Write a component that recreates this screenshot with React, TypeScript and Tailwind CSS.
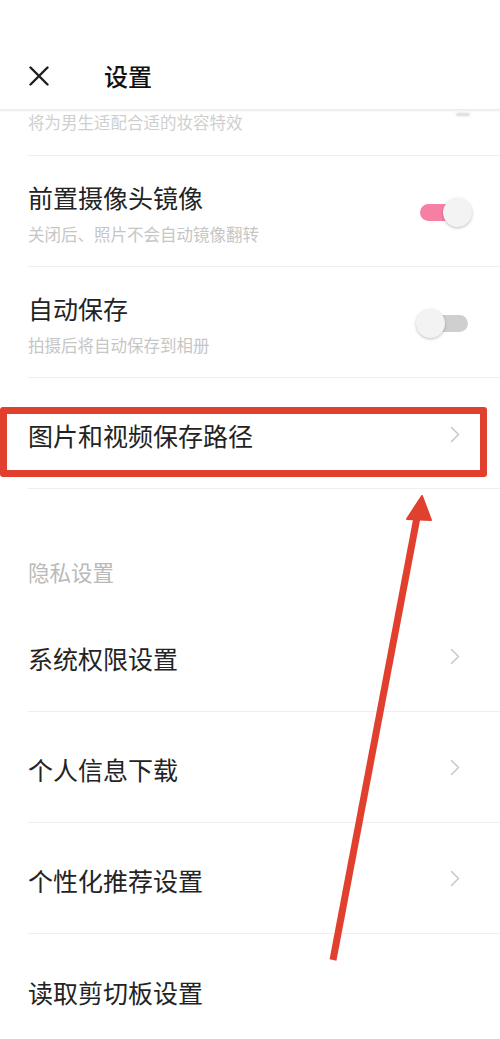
import { ReactNode } from "react";

const font = { fontFamily: '"Noto Sans CJK SC", "Noto Sans", sans-serif' };

const Chevron = () => (
  <svg width="10" height="17" viewBox="0 0 10 17" fill="none" className="shrink-0">
    <path d="M1.5 1.5 L8.5 8.5 L1.5 15.5" stroke="#c9c9c9" strokeWidth="1.6" strokeLinecap="round" strokeLinejoin="round" />
  </svg>
);

const Toggle = ({ on }: { on: boolean }) => (
  <div className="relative w-[52px] h-[29px] shrink-0">
    <div
      className={
        on
          ? "absolute left-0 top-[6px] w-[44px] h-[17px] rounded-full bg-[#f77fa4]"
          : "absolute right-0 top-[6px] w-[44px] h-[17px] rounded-full bg-[#cfcfcf]"
      }
    />
    <div
      className={
        on
          ? "absolute right-0 top-0 w-[29px] h-[29px] rounded-full bg-[#f3f3f3] shadow-[0_1px_3px_rgba(0,0,0,0.25)]"
          : "absolute left-0 top-0 w-[29px] h-[29px] rounded-full bg-[#f3f3f3] shadow-[0_1px_3px_rgba(0,0,0,0.25)]"
      }
    />
  </div>
);

interface RowProps {
  title: string;
  desc?: string;
  right: ReactNode;
  last?: boolean;
  children?: ReactNode;
}

const Row = ({ title, desc, right, last, children }: RowProps) => (
  <div className="relative pl-[28px]">
    <div
      className={
        last
          ? "h-[111px] flex items-center justify-between"
          : "h-[111px] flex items-center justify-between border-b border-[#efefef]"
      }
    >
      {desc ? (
        <div className="flex flex-col pt-[3px]">
          <span className="text-[25px] leading-[34px] text-[#232323]">{title}</span>
          <span className="text-[16.5px] leading-[22px] mt-[9px] text-[#c6c6c6]">{desc}</span>
        </div>
      ) : (
        <span className="text-[25px] leading-[34px] text-[#232323] pt-[4px]">{title}</span>
      )}
      {right}
    </div>
    {children}
  </div>
);

export default function App() {
  return (
    <div className="relative w-[500px] h-[1039px] overflow-hidden bg-white" style={font}>
      {/* header */}
      <div className="relative z-10 h-[110px] bg-white flex items-center pt-[42px] shadow-[0_1px_2px_rgba(0,0,0,0.08)] border-b border-[#ececec]">
        <svg width="20" height="20" viewBox="0 0 20 20" className="ml-[29px]">
          <path d="M1.5 1.5 L18.5 18.5 M18.5 1.5 L1.5 18.5" stroke="#1f1f1f" strokeWidth="2.4" strokeLinecap="round" />
        </svg>
        <span className="ml-[55px] text-[24px] font-medium text-[#111]">设置</span>
      </div>

      {/* tail of the row scrolled under the header */}
      <div className="relative h-[46px] ml-[28px] border-b border-[#efefef]">
        <span className="absolute left-0 top-[1px] text-[16.5px] leading-[22px] text-[#cfcfcf]">
          将为男生适配合适的妆容特效
        </span>
        <div className="absolute right-[30px] top-[3px] w-[14px] h-[3px] rounded-full bg-[#d8d8d8] blur-[1px]" />
      </div>

      <Row title="前置摄像头镜像" desc="关闭后、照片不会自动镜像翻转" right={<div className="pr-[28px] pt-[3px]"><Toggle on /></div>} />
      <Row title="自动保存" desc="拍摄后将自动保存到相册" right={<div className="pr-[32px] pt-[3px]"><Toggle on={false} /></div>} />
      <Row title="图片和视频保存路径" right={<div className="pr-[40px] pt-[2px]"><Chevron /></div>}>
        <div className="absolute left-0 right-[13px] top-[29px] bottom-[12px] border-[7px] border-[#e2402f] rounded-[3px]" />
      </Row>

      {/* section */}
      <div className="h-[112px] pl-[28px] pt-[68px]">
        <span className="text-[21.5px] leading-[30px] text-[#b9b9b9]">隐私设置</span>
      </div>

      <Row title="系统权限设置" right={<div className="pr-[40px]"><Chevron /></div>} />
      <Row title="个人信息下载" right={<div className="pr-[40px]"><Chevron /></div>} />
      <Row title="个性化推荐设置" right={<div className="pr-[40px]"><Chevron /></div>} />
      <Row title="读取剪切板设置" right={null} last />

      {/* annotation arrow */}
      <svg className="absolute left-0 top-0 pointer-events-none" width="500" height="1039" viewBox="0 0 500 1039">
        <line x1="333" y1="960" x2="418" y2="512" stroke="#e2402f" strokeWidth="7" />
        <polygon points="422,496 407,519 431,520" fill="#e2402f" stroke="#e2402f" strokeWidth="2" strokeLinejoin="round" />
      </svg>
    </div>
  );
}
